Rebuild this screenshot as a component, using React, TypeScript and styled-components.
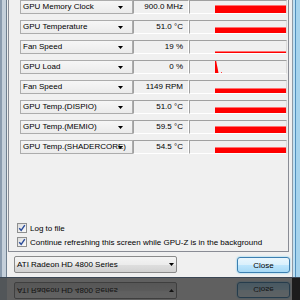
import React from "react";
import styled, { createGlobalStyle } from "styled-components";

const GlobalStyle = createGlobalStyle`
  html, body {
    margin: 0;
    padding: 0;
    background: #1c1c1c;
  }
  body {
    font-family: "Liberation Sans", Arial, sans-serif;
    font-size: 8px;
    color: #000000;
  }
`;

const Screen = styled.div`
  width: 300px;
  height: 300px;
  overflow: hidden;
  display: flex;
  flex-direction: column;
  background: #1c1c1c;
`;

const WindowRow = styled.div`
  display: flex;
  height: 277px;
  flex: none;
`;

const GlassLeft = styled.div`
  width: 7px;
  flex: none;
  background: linear-gradient(
    90deg,
    #8a9bae 0 2px,
    #c4cfda 2px 6px,
    #6f7f8f 6px 7px
  );
`;

const GlassRight = styled.div`
  width: 8px;
  flex: none;
  background: linear-gradient(
    90deg,
    #8d99a5 0 1px,
    #bfe0f2 1px 3px,
    #4f8fbd 3px 4px,
    #a6d3ec 4px 8px
  );
`;

const Dialog = styled.div`
  width: 285px;
  flex: none;
  background: #f0f0f0;
  display: flex;
  flex-direction: column;
`;

const TabPage = styled.div`
  margin-left: 1px;
  width: 279px;
  height: 251px;
  border: 1px solid #898c95;
  border-top: none;
  display: flex;
  flex-direction: column;
`;

const SensorList = styled.div`
  display: flex;
  flex-direction: column;
  gap: 6px;
  padding-left: 11px;
`;

const SensorRow = styled.div`
  display: grid;
  grid-template-columns: 113px 56px 98px;
  height: 14px;
`;

const LabelBox = styled.div`
  position: relative;
  box-sizing: border-box;
  height: 14px;
  border: 1px solid #acacac;
  background: linear-gradient(#f6f6f6, #ebebeb);
  padding-left: 2px;
  line-height: 12px;
  white-space: nowrap;
`;

const Arrow = styled.svg`
  position: absolute;
  right: 9px;
  top: 5px;
`;

const ValueBox = styled.div`
  box-sizing: border-box;
  height: 14px;
  border-top: 1px solid #a0a0a0;
  border-left: 1px solid #a0a0a0;
  border-bottom: 1px solid #ffffff;
  border-right: 1px solid #ffffff;
  padding-right: 5px;
  text-align: right;
  line-height: 12px;
  white-space: nowrap;
`;

const GraphBox = styled.div`
  box-sizing: border-box;
  height: 14px;
  border-top: 1px solid #a0a0a0;
  border-left: 1px solid #a0a0a0;
  border-bottom: 1px solid #ffffff;
  border-right: 1px solid #dcdcdc;
  display: flex;
`;

const Options = styled.div`
  margin-top: auto;
  padding: 0 0 2px 8px;
  display: flex;
  flex-direction: column;
`;

const OptionRow = styled.label`
  display: flex;
  align-items: center;
  gap: 3px;
  height: 14px;
  white-space: nowrap;
`;

const CheckBox = styled.span`
  box-sizing: border-box;
  width: 10px;
  height: 10px;
  border: 1px solid #8e8f8f;
  background: linear-gradient(135deg, #dcdcdc, #fbfbfb);
  display: flex;
  align-items: center;
  justify-content: center;
`;

const BottomBar = styled.div<{ $mirror?: boolean }>`
  height: 25px;
  box-sizing: border-box;
  padding: 4px 2px 0 7px;
  display: flex;
  align-items: flex-start;
  background: #f0f0f0;
  transform: ${(p) => (p.$mirror ? "scaleY(-1)" : "none")};
`;

const DeviceSelect = styled.div`
  position: relative;
  box-sizing: border-box;
  width: 163px;
  height: 17px;
  border: 1px solid #8a8a8a;
  border-radius: 2px;
  background: linear-gradient(#f4f4f4 0%, #ececec 50%, #dfdfdf 50%, #d2d2d2 100%);
  padding-left: 2px;
  line-height: 15px;
  white-space: nowrap;
`;

const SelectArrow = styled.svg`
  position: absolute;
  right: 2px;
  top: 6px;
`;

const CloseButton = styled.button`
  margin: 1px 0 0 auto;
  box-sizing: border-box;
  width: 53px;
  height: 16px;
  padding: 0;
  border: 1px solid #3c7fb1;
  border-radius: 3px;
  background: linear-gradient(#eaf6fd 0%, #d9f0fc 50%, #bee6fd 50%, #a7d9f5 100%);
  box-shadow: 0 0 2px #62c8f2;
  font-family: "Liberation Sans", Arial, sans-serif;
  font-size: 8px;
  color: #000000;
`;

const FrameEdge = styled.div`
  height: 1px;
  flex: none;
  background: #3a4654;
`;

const Reflection = styled.div`
  flex: 1;
  display: flex;
  opacity: 0.32;
  overflow: hidden;
`;

const ReflectedGlass = styled.div`
  width: 7px;
  flex: none;
  background: #c4cfda;
`;

const ReflectedDialog = styled.div`
  width: 285px;
  flex: none;
`;

type Sensor = {
  name: string;
  value: string;
  bar: number;
  spike?: boolean;
};

const sensors: Sensor[] = [
  { name: "GPU Memory Clock", value: "900.0 MHz", bar: 8 },
  { name: "GPU Temperature", value: "51.0 °C", bar: 6 },
  { name: "Fan Speed", value: "19 %", bar: 2 },
  { name: "GPU Load", value: "0 %", bar: 0, spike: true },
  { name: "Fan Speed", value: "1149 RPM", bar: 5 },
  { name: "GPU Temp.(DISPIO)", value: "51.0 °C", bar: 6 },
  { name: "GPU Temp.(MEMIO)", value: "59.5 °C", bar: 7 },
  { name: "GPU Temp.(SHADERCORE)", value: "54.5 °C", bar: 6 },
];

const Graph = ({ bar, spike }: { bar: number; spike?: boolean }) => (
  <svg width="96" height="12" viewBox="0 0 96 12">
    {bar > 0 && (
      <>
        <rect x="25" y={12 - bar} width="71" height={bar} fill="#ff0000" />
        <rect x="25" y={12 - bar} width="71" height="1" fill="#ff7070" />
      </>
    )}
    {spike && (
      <>
        <path d="M25 0 L26.2 0 L28.5 12 L25 12 Z" fill="#ff0000" />
        <rect x="31" y="11" width="1" height="1" fill="#ff4040" />
      </>
    )}
  </svg>
);

const Check = () => (
  <svg width="8" height="8" viewBox="0 0 8 8">
    <path d="M1.2 4.2 L3.2 6.3 L6.8 1.2" fill="none" stroke="#2a4c9a" strokeWidth="1.4" />
  </svg>
);

const Bar = ({ mirror }: { mirror?: boolean }) => (
  <BottomBar $mirror={mirror}>
    <DeviceSelect>
      ATI Radeon HD 4800 Series
      <SelectArrow width="5" height="3" viewBox="0 0 5 3">
        <path d="M0 0 L5 0 L2.5 3 Z" fill="#000" />
      </SelectArrow>
    </DeviceSelect>
    <CloseButton>Close</CloseButton>
  </BottomBar>
);

export default function App() {
  return (
    <>
      <GlobalStyle />
      <Screen>
        <WindowRow>
          <GlassLeft />
          <Dialog>
            <TabPage>
              <SensorList>
                {sensors.map((s, i) => (
                  <SensorRow key={i}>
                    <LabelBox>
                      {s.name}
                      <Arrow width="5" height="3" viewBox="0 0 5 3">
                        <path d="M0 0 L5 0 L2.5 3 Z" fill="#000" />
                      </Arrow>
                    </LabelBox>
                    <ValueBox>{s.value}</ValueBox>
                    <GraphBox>
                      <Graph bar={s.bar} spike={s.spike} />
                    </GraphBox>
                  </SensorRow>
                ))}
              </SensorList>
              <Options>
                <OptionRow>
                  <CheckBox>
                    <Check />
                  </CheckBox>
                  Log to file
                </OptionRow>
                <OptionRow>
                  <CheckBox>
                    <Check />
                  </CheckBox>
                  Continue refreshing this screen while GPU-Z is in the background
                </OptionRow>
              </Options>
            </TabPage>
            <Bar />
          </Dialog>
          <GlassRight />
        </WindowRow>
        <FrameEdge />
        <Reflection>
          <ReflectedGlass />
          <ReflectedDialog>
            <Bar mirror />
          </ReflectedDialog>
        </Reflection>
      </Screen>
    </>
  );
}
